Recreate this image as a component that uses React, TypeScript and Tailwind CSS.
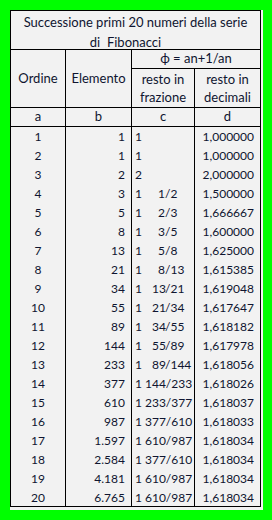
const rows: { b: string; int: string; frac?: string; d: string }[] = [
  { b: '1', int: '1', d: '1,000000' },
  { b: '1', int: '1', d: '1,000000' },
  { b: '2', int: '2', d: '2,000000' },
  { b: '3', int: '1', frac: '1/2', d: '1,500000' },
  { b: '5', int: '1', frac: '2/3', d: '1,666667' },
  { b: '8', int: '1', frac: '3/5', d: '1,600000' },
  { b: '13', int: '1', frac: '5/8', d: '1,625000' },
  { b: '21', int: '1', frac: '8/13', d: '1,615385' },
  { b: '34', int: '1', frac: '13/21', d: '1,619048' },
  { b: '55', int: '1', frac: '21/34', d: '1,617647' },
  { b: '89', int: '1', frac: '34/55', d: '1,618182' },
  { b: '144', int: '1', frac: '55/89', d: '1,617978' },
  { b: '233', int: '1', frac: '89/144', d: '1,618056' },
  { b: '377', int: '1', frac: '144/233', d: '1,618026' },
  { b: '610', int: '1', frac: '233/377', d: '1,618037' },
  { b: '987', int: '1', frac: '377/610', d: '1,618033' },
  { b: '1.597', int: '1', frac: '610/987', d: '1,618034' },
  { b: '2.584', int: '1', frac: '377/610', d: '1,618034' },
  { b: '4.181', int: '1', frac: '610/987', d: '1,618034' },
  { b: '6.765', int: '1', frac: '610/987', d: '1,618034' },
];

function Fraction({ int, frac }: { int: string; frac?: string }) {
  if (!frac) return <span>{int}</span>;
  const [num, den] = frac.split('/');
  // wide fractions no longer fit the ??/?? slots
  if (num.length > 2) {
    return (
      <span className="flex">
        <span>{int}</span>
        <span className="ml-[3px]">{frac}</span>
      </span>
    );
  }
  return (
    <span className="flex">
      <span className="w-[17px]">{int}</span>
      <span className="w-[13px] text-right">{num}</span>
      <span>/</span>
      <span>{den}</span>
    </span>
  );
}

export default function App() {
  const cell = 'border-r border-b border-black';
  return (
    <div
      className="min-h-[520px] bg-[#00ff00] pt-[10px] pl-[10px] text-[12px] text-[#0f1530]"
      style={{ fontFamily: 'Lato, "Liberation Sans", sans-serif' }}
    >
      <div className="inline-block bg-[#f2f2f2] pr-[2px] pb-[3px]">
        <div className="grid grid-cols-[55px_66px_63px_66px] grid-rows-[39px_19px_39px_19px_repeat(20,19px)] border-l border-t border-black">
          {/* Title */}
          <div className={`${cell} col-span-4 pt-[2px] text-center text-[13px] leading-[19.5px]`}>
            <div>Successione primi 20 numeri della serie</div>
            <div className="pr-[20px]">di&nbsp;&nbsp;Fibonacci</div>
          </div>

          {/* Header */}
          <div className={`${cell} row-span-2 flex items-center justify-center text-[13px]`}>Ordine</div>
          <div className={`${cell} row-span-2 flex items-center justify-center text-[13px]`}>Elemento</div>
          <div className={`${cell} col-span-2 flex items-center justify-center text-[13px]`}>ϕ = an+1/an</div>
          <div className={`${cell} flex flex-col items-center justify-center text-[13px] leading-[18px]`}>
            <span>resto in</span>
            <span>frazione</span>
          </div>
          <div className={`${cell} flex flex-col items-center justify-center text-[13px] leading-[18px]`}>
            <span>resto in</span>
            <span>decimali</span>
          </div>
          <div className={`${cell} flex items-center justify-center text-[13px]`}>a</div>
          <div className={`${cell} flex items-center justify-center text-[13px]`}>b</div>
          <div className={`${cell} flex items-center justify-center text-[13px]`}>c</div>
          <div className={`${cell} flex items-center justify-center text-[13px]`}>d</div>

          {/* Data */}
          {rows.map((r, i) => {
            const last = i === rows.length - 1;
            const line = last ? 'border-r border-b border-black' : 'border-r border-black';
            return [
              <div key={`a${i}`} className={`${line} flex items-center justify-center pt-[1px]`}>
                {i + 1}
              </div>,
              <div key={`b${i}`} className={`${line} flex items-center justify-end pt-[1px] pr-[6px]`}>
                {r.b}
              </div>,
              <div key={`c${i}`} className={`${line} flex items-center pt-[1px] pl-[3px] whitespace-nowrap`}>
                <Fraction int={r.int} frac={r.frac} />
              </div>,
              <div key={`d${i}`} className={`${line} flex items-center justify-end pt-[1px] pr-[6px]`}>
                {r.d}
              </div>,
            ];
          })}
        </div>
      </div>
    </div>
  );
}
